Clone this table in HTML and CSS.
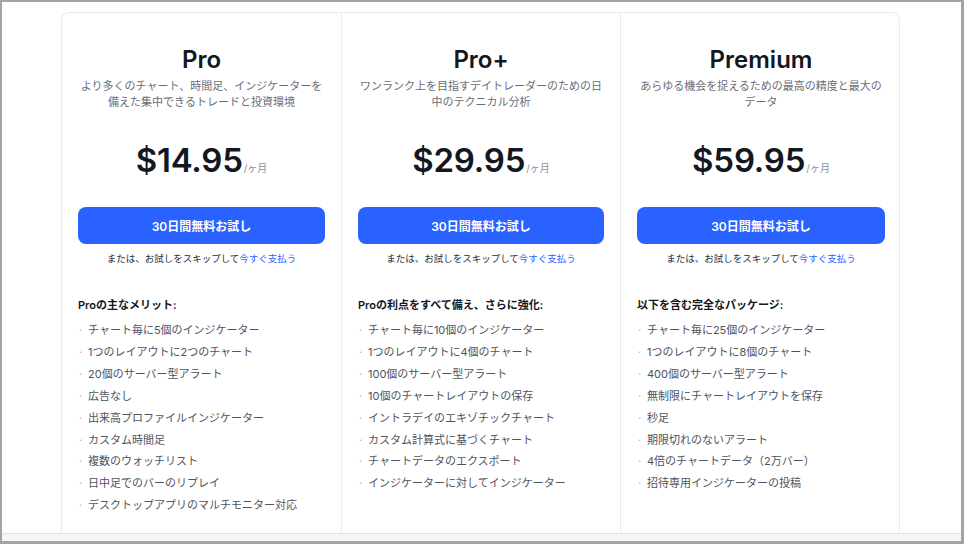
FILE: index.html
```html
<!DOCTYPE html>
<html lang="ja">
<head>
<meta charset="utf-8">
<link rel="stylesheet" href="styles.css">
</head>
<body>
<div class="frame">
  <div class="card">
    <div class="col">
      <h2 class="title">Pro</h2>
      <p class="desc">より多くのチャート、時間足、インジケーターを備えた集中できるトレードと投資環境</p>
      <div class="price"><span class="amount">$14.95</span><span class="per">/ヶ月</span></div>
      <button class="cta">30日間無料お試し</button>
      <p class="skip">または、お試しをスキップして<a href="#">今すぐ支払う</a></p>
      <h3 class="feat-head">Proの主なメリット:</h3>
      <ul class="feats">
        <li>チャート毎に5個のインジケーター</li>
        <li>1つのレイアウトに2つのチャート</li>
        <li>20個のサーバー型アラート</li>
        <li>広告なし</li>
        <li>出来高プロファイルインジケーター</li>
        <li>カスタム時間足</li>
        <li>複数のウォッチリスト</li>
        <li>日中足でのバーのリプレイ</li>
        <li>デスクトップアプリのマルチモニター対応</li>
      </ul>
    </div>
    <div class="col">
      <h2 class="title">Pro+</h2>
      <p class="desc">ワンランク上を目指すデイトレーダーのための日中のテクニカル分析</p>
      <div class="price"><span class="amount">$29.95</span><span class="per">/ヶ月</span></div>
      <button class="cta">30日間無料お試し</button>
      <p class="skip">または、お試しをスキップして<a href="#">今すぐ支払う</a></p>
      <h3 class="feat-head">Proの利点をすべて備え、さらに強化:</h3>
      <ul class="feats">
        <li>チャート毎に10個のインジケーター</li>
        <li>1つのレイアウトに4個のチャート</li>
        <li>100個のサーバー型アラート</li>
        <li>10個のチャートレイアウトの保存</li>
        <li>イントラデイのエキゾチックチャート</li>
        <li>カスタム計算式に基づくチャート</li>
        <li>チャートデータのエクスポート</li>
        <li>インジケーターに対してインジケーター</li>
      </ul>
    </div>
    <div class="col">
      <h2 class="title">Premium</h2>
      <p class="desc">あらゆる機会を捉えるための最高の精度と最大のデータ</p>
      <div class="price"><span class="amount">$59.95</span><span class="per">/ヶ月</span></div>
      <button class="cta">30日間無料お試し</button>
      <p class="skip">または、お試しをスキップして<a href="#">今すぐ支払う</a></p>
      <h3 class="feat-head">以下を含む完全なパッケージ:</h3>
      <ul class="feats">
        <li>チャート毎に25個のインジケーター</li>
        <li>1つのレイアウトに8個のチャート</li>
        <li>400個のサーバー型アラート</li>
        <li>無制限にチャートレイアウトを保存</li>
        <li>秒足</li>
        <li>期限切れのないアラート</li>
        <li>4倍のチャートデータ（2万バー）</li>
        <li>招待専用インジケーターの投稿</li>
      </ul>
    </div>
  </div>
  <div class="strip"></div>
</div>
</body>
</html>
```

FILE: styles.css
```css
* { box-sizing: border-box; }
html, body { margin: 0; padding: 0; }
body {
  font-family: Inter, "Noto Sans CJK JP", sans-serif;
  color: #131722;
  background: #ffffff;
}
.frame {
  width: 964px;
  height: 544px;
  border: 2px solid #a4a4a4;
  border-right-width: 3px;
  border-bottom-width: 3px;
  background: #ffffff;
  display: flex;
  flex-direction: column;
  align-items: flex-start;
  padding-top: 10px;
  padding-left: 59px;
  overflow: hidden;
}
.card {
  width: 839px;
  flex: 1;
  display: grid;
  grid-template-columns: 280px 279px 280px;
  border: 1px solid #ebebeb;
  border-bottom: none;
  border-radius: 8px 8px 0 0;
  overflow: hidden;
}
.col {
  padding: 32px 16px 0;
  border-right: 1px solid #ececec;
  text-align: center;
}
.col:last-child { border-right: none; }
.title {
  margin: 0;
  font-size: 24px;
  line-height: 30px;
  font-weight: 600;
  color: #131722;
}
.desc {
  margin: 3px 0 0;
  font-size: 11px;
  line-height: 16px;
  color: #6a6d78;
}
.price {
  margin-top: 30px;
  height: 40px;
  display: flex;
  justify-content: center;
  align-items: baseline;
}
.amount {
  font-size: 33px;
  line-height: 40px;
  font-weight: 600;
  letter-spacing: -0.2px;
  color: #131722;
}
.per {
  font-size: 10px;
  color: #8a8d96;
  margin-left: 1px;
}
.cta {
  display: block;
  width: 100%;
  height: 37px;
  margin-top: 27px;
  border: none;
  border-radius: 8px;
  background: #2962ff;
  color: #ffffff;
  font-family: inherit;
  font-size: 12px;
  font-weight: 600;
}
.skip {
  margin: 8px 0 0;
  font-size: 9.5px;
  line-height: 14px;
  color: #2a2e39;
}
.skip a {
  color: #2962ff;
  text-decoration: none;
}
.feat-head {
  margin: 31px 0 0;
  text-align: left;
  font-size: 11px;
  line-height: 16px;
  font-weight: 600;
  color: #131722;
}
.feats {
  list-style: none;
  margin: 7px 0 0;
  padding: 0;
  text-align: left;
}
.feats li {
  position: relative;
  padding-left: 10px;
  font-size: 11px;
  line-height: 21.9px;
  color: #50535e;
}
.feats li::before {
  content: "·";
  position: absolute;
  left: 1px;
  top: 0;
  color: #b2b5be;
}
.strip {
  height: 8px;
  flex: none;
  margin-left: -59px;
  width: calc(100% + 59px);
  border-top: 1px solid #e3e3e3;
  background: #f5f5f5;
}
```
